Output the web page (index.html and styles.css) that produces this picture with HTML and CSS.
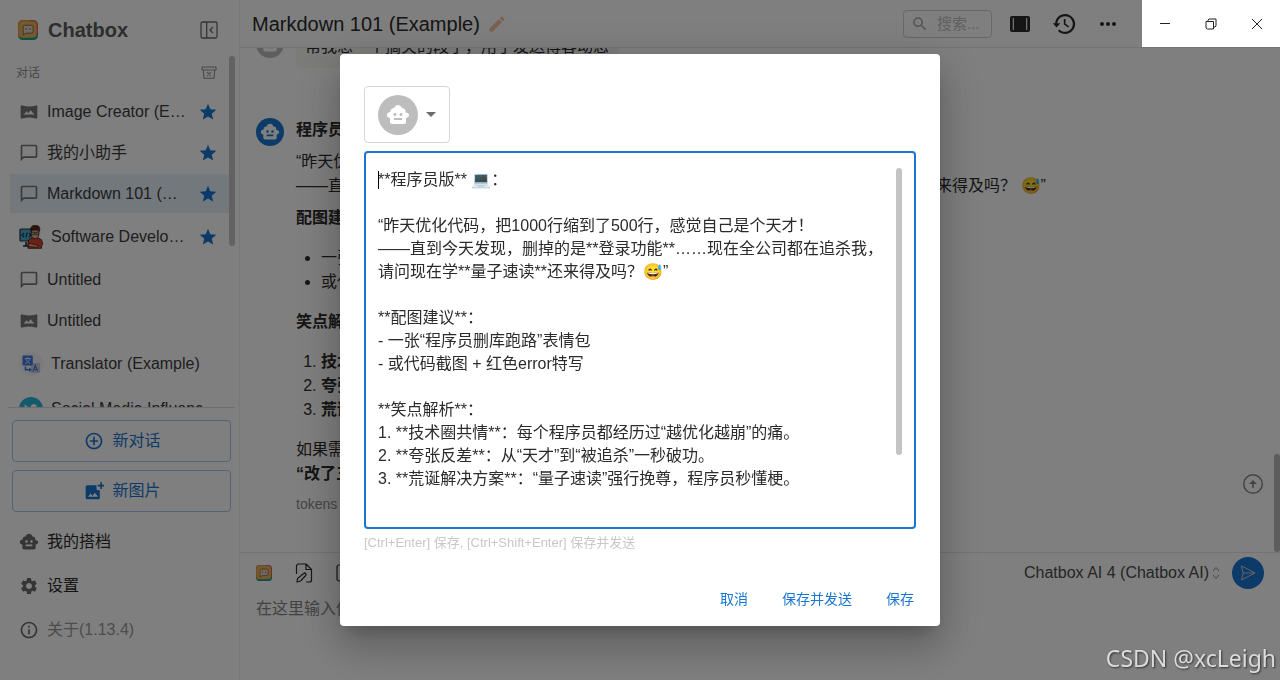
FILE: index.html
```html
<!DOCTYPE html>
<html lang="zh-CN">
<head>
<meta charset="utf-8">
<meta name="viewport" content="width=device-width, initial-scale=1">
<title>Chatbox</title>
<link rel="stylesheet" href="styles.css">
</head>
<body>
<svg class="sprite" aria-hidden="true">
  <symbol id="i-logo" viewBox="0 0 20 20">
    <rect x="0" y="2" width="20" height="18" rx="4.5" fill="#1f9c8a"/>
    <path d="M4.500 0H15.500a4.500 4.500 0 0 1 4.500 4.500V14H0V4.500A4.500 4.500 0 0 1 4.500 0Z" fill="#e0604c"/>
    <path d="M4.500 0H12L2 18.500 0 15V4.500A4.500 4.500 0 0 1 4.500 0Z" fill="#d9a03c"/>
    <rect x="1.300" y="1.300" width="17.400" height="16.400" rx="3.600" fill="#e8b060"/>
    <path d="M6.500 5.300h7a1.600 1.600 0 0 1 1.600 1.600v4.600a1.600 1.600 0 0 1-1.600 1.600H8.300L5.200 15V6.900a1.600 1.600 0 0 1 1.300-1.600Z" fill="#e6d5bf" stroke="#7b6348" stroke-width=".9"/>
    <path d="M8.300 8.300v1.500M12 8.300v1.500" stroke="#5d4630" stroke-width="1"/>
  </symbol>
  <symbol id="i-robot" viewBox="0 0 24 24"><path d="M19.500 9.500C20 7 18.500 5 16 5.300 15.500 3.300 14 2 12 2S8.500 3.300 8 5.300C5.500 5 4 7 4.500 9c-2 .2-3.500 1.300-3.500 3s1.300 3 3 3v4c0 1.100.9 2 2 2h12c1.100 0 2-.9 2-2v-4c1.660 0 3-1.340 3-3s-1.500-2.500-3.500-2.500M7.500 11.500c0-.83.67-1.500 1.500-1.500s1.500.67 1.500 1.500S9.830 13 9 13s-1.500-.67-1.500-1.500M16 17H8v-2h8zm-1-4c-.83 0-1.500-.67-1.500-1.500S14.170 10 15 10s1.500.67 1.500 1.500S15.830 13 15 13"/></symbol>
  <symbol id="i-pano" viewBox="0 0 24 24"><path d="M21.010 4C20.450 4 17.400 5.500 12 5.500c-5.310 0-8.490-1.490-9.010-1.490C2.460 4.010 2 4.450 2 5.020V19c0 .57.46 1.010.99 1.010.57 0 3.550-1.500 9.010-1.500 5.420 0 8.440 1.500 9.010 1.500.53 0 .99-.44.99-1.010V5c0-.57-.46-1-.99-1zM12 15c-2.340 0-4.520.15-6.520.41l3.690-4.420 2 2.400L14 10l4.510 5.400C16.520 15.150 14.300 15 12 15z"/></symbol>
  <symbol id="i-chat" viewBox="0 0 24 24"><path d="M4 4h16v12H5.170L4 17.170V4m0-2c-1.100 0-1.990.9-1.990 2L2 22l4-4h14c1.100 0 2-.9 2-2V4c0-1.100-.9-2-2-2z"/></symbol>
  <symbol id="i-star" viewBox="0 0 24 24"><path d="M12 17.270 18.180 21l-1.640-7.030L22 9.240l-7.190-.61L12 2 9.190 8.630 2 9.240l5.460 4.730L5.820 21z"/></symbol>
  <symbol id="i-dev" viewBox="0 0 24 24">
    <path d="M7 17v4M4 21h7" stroke="#222" stroke-width="1.500"/>
    <rect x="1" y="4" width="15" height="12" rx="1" fill="#48a9cf" stroke="#26333a" stroke-width="1.200"/>
    <path d="m5 8-2 2 2 2M10 8l2 2-2 2M8.300 7.500l-1.400 5" fill="none" stroke="#1c3440" stroke-width="1.100"/>
    <path d="M9 23.300c-.8-7 1-9.500 3-10l4-1 4 1c2.400.6 3.800 2.700 3.500 6.500l-1 .8V23.300Z" fill="#d8432f" stroke="#331713" stroke-width=".8"/>
    <path d="M12.300 5h7.500v5c0 5-7.500 5-7.500 0Z" fill="#e0a27e" stroke="#3a2019" stroke-width=".8"/>
    <path d="M12 6.500c-1.500-4 1-6.300 4.300-6.300 3.800 0 5.500 2.500 4 6.300l-1.300-2h-5.300Z" fill="#5b2a1b" stroke="#2a1510" stroke-width=".6"/>
    <path d="M12.500 7.300h3v2h-3zM16.800 7.300h3v2h-3z" fill="#d9c3b4" stroke="#222" stroke-width=".7"/>
    <path d="m9.500 18.200 10.300 2.300-2 1.800-8-.7Z" fill="#e0a27e" stroke="#3a2019" stroke-width=".7"/>
  </symbol>
  <symbol id="i-trans" viewBox="0 0 24 24">
    <circle cx="12" cy="12" r="12" fill="#f4f4f6"/>
    <rect x="11.500" y="11" width="9.500" height="10" rx="1" fill="#c9ced9"/>
    <rect x="3.500" y="3.500" width="10.300" height="10" rx="1" fill="#3f78e8"/>
    <path d="M5.800 6.500h5.800M8.700 5v1.500M10.800 6.500c-.7 2.500-2.200 4-4.600 5M6.700 6.500c.7 2.500 2.200 4 4.600 5" fill="none" stroke="#dbe5fb"/>
    <path d="m13.900 19.500 2.400-6.200 2.400 6.200M14.800 17.500h3" fill="none" stroke="#3f78e8" stroke-width="1.100"/>
    <path d="M6.500 14.500v3.300h4" fill="none" stroke="#3f78e8" stroke-width="1.600"/><path d="m10 15.500 3 2.300-3 2.300z" fill="#3f78e8"/>
  </symbol>
  <symbol id="i-bird" viewBox="0 0 24 24"><circle cx="12" cy="12" r="12" fill="#28b5dc"/><path d="M18.500 8.300c-.5.2-1 .4-1.500.4.500-.3 1-.9 1.200-1.500-.5.300-1.100.6-1.700.7a2.800 2.800 0 0 0-4.700 2.500A7.700 7.700 0 0 1 6 7.500a2.800 2.800 0 0 0 .9 3.700c-.5 0-.9-.1-1.300-.3 0 1.300 1 2.500 2.200 2.700-.4.100-.8.1-1.200 0a2.700 2.700 0 0 0 2.500 1.900A5.600 5.600 0 0 1 5 16.700c6 3.500 12.400-.8 12-7 .6-.4 1.100-.8 1.500-1.400Z" fill="#fff"/></symbol>
  <symbol id="i-gear" viewBox="0 0 24 24"><path d="M19.140 12.940c.04-.3.06-.61.06-.94 0-.32-.02-.64-.07-.94l2.030-1.580c.18-.14.23-.41.12-.61l-1.920-3.320c-.12-.22-.37-.29-.59-.22l-2.390.96c-.5-.38-1.030-.7-1.620-.94l-.36-2.540c-.04-.24-.24-.41-.48-.41h-3.840c-.24 0-.43.17-.47.41l-.36 2.540c-.59.24-1.130.57-1.620.94l-2.390-.96c-.22-.08-.47 0-.59.22L2.740 8.870c-.12.21-.08.47.12.61l2.030 1.580c-.05.3-.09.63-.09.94s.02.64.07.94l-2.030 1.580c-.18.14-.23.41-.12.61l1.920 3.320c.12.22.37.29.59.22l2.390-.96c.5.38 1.030.7 1.620.94l.36 2.540c.05.24.24.41.48.41h3.840c.24 0 .44-.17.47-.41l.36-2.540c.59-.24 1.130-.56 1.620-.94l2.390.96c.22.08.47 0 .59-.22l1.920-3.320c.12-.22.07-.47-.12-.61zM12 15.600c-1.980 0-3.600-1.620-3.600-3.600s1.620-3.600 3.600-3.600 3.600 1.620 3.600 3.600-1.620 3.600-3.600 3.600"/></symbol>
  <symbol id="i-info" viewBox="0 0 24 24"><path d="M11 7h2v2h-2zm0 4h2v6h-2zm1-9C6.480 2 2 6.480 2 12s4.480 10 10 10 10-4.480 10-10S17.520 2 12 2m0 18c-4.410 0-8-3.590-8-8s3.590-8 8-8 8 3.590 8 8-3.590 8-8 8"/></symbol>
  <symbol id="i-add" viewBox="0 0 24 24"><path d="M13 7h-2v4H7v2h4v4h2v-4h4v-2h-4zm-1-5C6.480 2 2 6.480 2 12s4.480 10 10 10 10-4.480 10-10S17.520 2 12 2m0 18c-4.410 0-8-3.590-8-8s3.590-8 8-8 8 3.590 8 8-3.590 8-8 8"/></symbol>
  <symbol id="i-photo" viewBox="0 0 24 24"><path d="M21.500 1.500h-2v3h-3v2h3v3h2v-3h3v-2h-3zM15 5H4c-1.100 0-2 .9-2 2v13c0 1.100.9 2 2 2h13c1.100 0 2-.9 2-2v-9h-2.500A1.500 1.500 0 0 1 15 9.500zM5 19l3-4 2 3 3-4 4 5z"/></symbol>
  <symbol id="i-edit" viewBox="0 0 24 24"><path d="M3 17.250V21h3.750L17.810 9.940l-3.750-3.750zM20.710 7.040c.39-.39.39-1.020 0-1.410l-2.340-2.340a1 1 0 0 0-1.410 0l-1.830 1.830 3.750 3.750z"/></symbol>
  <symbol id="i-search" viewBox="0 0 24 24"><path d="M15.500 14h-.79l-.28-.27C15.410 12.590 16 11.110 16 9.500 16 5.910 13.090 3 9.500 3S3 5.910 3 9.500 5.910 16 9.500 16c1.610 0 3.090-.59 4.230-1.570l.27.28v.79l5 4.990L20.490 19zm-6 0C7.010 14 5 11.990 5 9.500S7.010 5 9.500 5 14 7.010 14 9.500 11.990 14 9.500 14"/></symbol>
  <symbol id="i-history" viewBox="0 0 24 24"><path d="M13 2c-5.200 0-9.500 4.100-9.900 9.300H.8l3.700 4.200 3.900-4.200H5.300C5.700 7.300 9 4.200 13 4.200a7.800 7.800 0 1 1-5.600 13.200l-1.500 1.500A10 10 0 1 0 13 2m-1.200 5v5.600l4.500 3 .9-1.300-3.700-2.500V7z"/></symbol>
  <symbol id="i-dots" viewBox="0 0 24 24"><path d="M6 10a2 2 0 1 0 0 4 2 2 0 0 0 0-4m12 0a2 2 0 1 0 0 4 2 2 0 0 0 0-4m-6 0a2 2 0 1 0 0 4 2 2 0 0 0 0-4"/></symbol>
  <symbol id="i-width" viewBox="0 0 24 24"><rect x="2" y="4" width="20" height="16" rx="2"/><path d="M5.300 6v12M18.700 6v12" stroke="#fff" stroke-width="1.100"/></symbol>
  <symbol id="i-collapse" viewBox="0 0 18 18"><g fill="none" stroke="currentColor" stroke-width="1.300"><rect x="1" y="1" width="16" height="16" rx="1.500"/><path d="M6.700 1v16M13 6l-3 3 3 3"/></g></symbol>
  <symbol id="i-archive" viewBox="0 0 16 16"><g fill="none" stroke="currentColor" stroke-width="1.100"><rect x="1" y="2" width="14" height="3" rx=".5"/><path d="M2.300 5l.7 8.300h10L13.700 5M6 7.200l4 4M10 7.200l-4 4"/></g></symbol>
  <symbol id="i-send" viewBox="0 0 16 16"><path d="M1.500 1 15 8 1.500 15l1.700-7ZM3.200 8H15" fill="none" stroke="currentColor" stroke-width="1" stroke-linejoin="round"/></symbol>
</svg>

<div class="app">
  <aside class="sidebar">
    <div class="brand">
      <svg class="icon20"><use href="#i-logo"/></svg>
      <h1>Chatbox</h1>
      <button class="icon-btn" aria-label="收起侧栏"><svg class="icon18"><use href="#i-collapse"/></svg></button>
    </div>
    <div class="session-area">
      <div class="session-head"><span>对话</span><button class="icon-btn" aria-label="清理对话"><svg class="icon16"><use href="#i-archive"/></svg></button></div>
      <nav class="sessions">
        <a class="session" href="#"><svg class="icon20"><use href="#i-pano"/></svg><span class="name">Image Creator (Example)</span><svg class="icon20 star"><use href="#i-star"/></svg></a>
        <a class="session" href="#"><svg class="icon20"><use href="#i-chat"/></svg><span class="name">我的小助手</span><svg class="icon20 star"><use href="#i-star"/></svg></a>
        <a class="session selected" href="#"><svg class="icon20"><use href="#i-chat"/></svg><span class="name">Markdown 101 (Example)</span><svg class="icon20 star"><use href="#i-star"/></svg></a>
        <a class="session tall" href="#"><svg class="icon24"><use href="#i-dev"/></svg><span class="name">Software Developer (Example)</span><svg class="icon20 star"><use href="#i-star"/></svg></a>
        <a class="session" href="#"><svg class="icon20"><use href="#i-chat"/></svg><span class="name">Untitled</span></a>
        <a class="session" href="#"><svg class="icon20"><use href="#i-pano"/></svg><span class="name">Untitled</span></a>
        <a class="session tall" href="#"><svg class="icon24"><use href="#i-trans"/></svg><span class="name">Translator (Example)</span></a>
        <a class="session tall" href="#"><svg class="icon24"><use href="#i-bird"/></svg><span class="name">Social Media Influencer (Example)</span></a>
      </nav>
      <div class="thumb session-thumb"></div>
    </div>
    <div class="create">
      <button class="outlined"><svg class="icon20"><use href="#i-add"/></svg>新对话</button>
      <button class="outlined"><svg class="icon20"><use href="#i-photo"/></svg>新图片</button>
    </div>
    <nav class="menu">
      <a href="#"><svg class="icon20"><use href="#i-robot"/></svg>我的搭档</a>
      <a href="#"><svg class="icon20"><use href="#i-gear"/></svg>设置</a>
      <a class="muted" href="#"><svg class="icon20"><use href="#i-info"/></svg>关于(1.13.4)</a>
    </nav>
  </aside>

  <main class="main">
    <header class="topbar">
      <h2>Markdown 101 (Example)</h2>
      <button class="icon-btn pencil" aria-label="编辑"><svg class="icon20"><use href="#i-edit"/></svg></button>
      <div class="tools">
        <button class="search"><svg class="icon18"><use href="#i-search"/></svg>搜索...</button>
        <button class="icon-btn" aria-label="宽度"><svg class="icon24"><use href="#i-width"/></svg></button>
        <button class="icon-btn" aria-label="历史"><svg class="icon24"><use href="#i-history"/></svg></button>
        <button class="icon-btn" aria-label="更多"><svg class="icon24"><use href="#i-dots"/></svg></button>
      </div>
    </header>

    <section class="messages">
      <article class="message user">
        <span class="avatar grey"><svg class="icon20"><use href="#i-robot"/></svg></span>
        <p class="bubble">帮我想一个搞笑的段子，用于发送博客动态</p>
      </article>
      <article class="message">
        <span class="avatar blue"><svg class="icon20"><use href="#i-robot"/></svg></span>
        <div class="body">
          <p><strong>程序员版</strong> 💻：</p>
          <p>“昨天优化代码，把1000行缩到了500行，感觉自己是个天才！<br>——直到今天发现，删掉的是<strong>登录功能</strong>……现在全公司都在追杀我，请问现在学<strong>量子速读</strong>还来得及吗？ 😅”</p>
          <p><strong>配图建议</strong>：</p>
          <ul><li>一张“程序员删库跑路”表情包</li><li>或代码截图 + 红色error特写</li></ul>
          <p><strong>笑点解析</strong>：</p>
          <ol><li><strong>技术圈共情</strong>：每个程序员都经历过“越优化越崩”的痛。</li><li><strong>夸张反差</strong>：从“天才”到“被追杀”一秒破功。</li><li><strong>荒诞解决方案</strong>：“量子速读”强行挽尊。</li></ol>
          <p>如果需要调整风格，请告诉我！<br><strong>“改了三版”</strong></p>
          <p class="tokens">tokens used: 512</p>
        </div>
      </article>
      <button class="to-top" aria-label="回到顶部"><svg viewBox="0 0 22 22"><circle cx="11" cy="11" r="9.300" fill="none" stroke="currentColor" stroke-width="1.500"/><path d="M11 15V9" fill="none" stroke="currentColor" stroke-width="1.600"/><path d="M7 11l4-4 4 4z"/></svg></button>
      <div class="thumb message-thumb"></div>
    </section>

    <footer class="composer">
      <div class="composer-bar">
        <svg class="icon16"><use href="#i-logo"/></svg>
        <button class="icon-btn" aria-label="添加文件"><svg class="file" viewBox="0 0 18 20"><path d="M1.500 11V3a2 2 0 0 1 2-2H11l5.500 5.500V17a2 2 0 0 1-2 2H11M11 1v5.500h5.500M2 19l.5-3.500 6.200-5a1.400 1.400 0 0 1 2 2L5.500 18Z" fill="none" stroke="currentColor" stroke-width="1.200" stroke-linejoin="round"/></svg></button>
        <button class="icon-btn" aria-label="添加图片"><svg class="file" viewBox="0 0 18 20"><path d="M3 2h12a2 2 0 0 1 2 2v12a2 2 0 0 1-2 2H3a2 2 0 0 1-2-2V4a2 2 0 0 1 2-2M9 13l3-3 5 5" fill="none" stroke="currentColor" stroke-width="1.200"/><circle cx="6" cy="6" r="1"/></svg></button>
        <button class="model">Chatbox AI 4 (Chatbox AI)<svg viewBox="0 0 8 14"><path d="M1 5l3-3.500L7 5M1 9l3 3.500L7 9" fill="none" stroke="currentColor"/></svg></button>
        <button class="send" aria-label="发送"><svg class="icon16"><use href="#i-send"/></svg></button>
      </div>
      <textarea class="prompt" aria-label="输入" placeholder="在这里输入你的问题..."></textarea>
    </footer>
  </main>
</div>

<div class="backdrop">
  <div class="dialog" role="dialog" aria-modal="true" aria-label="编辑消息">
    <button class="role-select" aria-haspopup="listbox" aria-label="角色">
      <span class="avatar large"><svg class="icon24"><use href="#i-robot"/></svg></span>
      <svg class="caret" viewBox="0 0 10 5"><path d="M0 0h10L5 5z"/></svg>
    </button>
    <div class="field">
      <textarea class="editor" rows="15" aria-label="消息内容">**程序员版** 💻：

“昨天优化代码，把1000行缩到了500行，感觉自己是个天才！
——直到今天发现，删掉的是**登录功能**……现在全公司都在追杀我，请问现在学**量子速读**还来得及吗？😅”

**配图建议**：
- 一张“程序员删库跑路”表情包
- 或代码截图 + 红色error特写

**笑点解析**：
1. **技术圈共情**：每个程序员都经历过“越优化越崩”的痛。
2. **夸张反差**：从“天才”到“被追杀”一秒破功。
3. **荒诞解决方案**：“量子速读”强行挽尊，程序员秒懂梗。
</textarea>
      <div class="text-caret"></div>
      <div class="thumb editor-thumb"></div>
    </div>
    <p class="hint">[Ctrl+Enter] 保存, [Ctrl+Shift+Enter] 保存并发送</p>
    <div class="actions">
      <button>取消</button>
      <button>保存并发送</button>
      <button>保存</button>
    </div>
  </div>
</div>

<div class="window-controls">
  <button aria-label="最小化"><svg viewBox="0 0 12 12"><path d="M1 5.500h10"/></svg></button>
  <button aria-label="还原"><svg viewBox="0 0 12 12"><path d="M1 3.500h7.500V11H2.500L1 10ZM3 3.500V2l1-1h7v7L10 9H8.500"/></svg></button>
  <button aria-label="关闭"><svg viewBox="0 0 12 12"><path d="M1 1l10 10M11 1 1 11"/></svg></button>
</div>
<div class="watermark">CSDN @xcLeigh</div>
</body>
</html>
```
FILE: styles.css
```css
* { box-sizing: border-box; }

body {
  margin: 0;
  font: 16px/24px "Liberation Sans", "Noto Sans CJK SC", sans-serif;
  color: #2b2b2b;
  background: #fff;
}

h1, h2, p, ul, ol { margin: 0; }
a { color: inherit; text-decoration: none; }
button, textarea { font: inherit; color: inherit; }
button { border: 0; padding: 0; background: none; }
svg { display: block; flex: none; fill: currentColor; }

.sprite { position: absolute; width: 0; height: 0; }
.icon16 { width: 16px; height: 16px; }
.icon18 { width: 18px; height: 18px; }
.icon20 { width: 20px; height: 20px; }
.icon24 { width: 24px; height: 24px; }
.thumb { position: absolute; width: 6px; border-radius: 3px; background: #c4c4c4; }

.app {
  display: grid;
  grid-template-columns: 240px minmax(0, 1fr);
  height: 100vh;
  overflow: hidden;
}

/* Sidebar */
.sidebar {
  display: flex;
  flex-direction: column;
  min-height: 0;
  border-right: 1px solid #efefef;
}
.brand {
  display: flex;
  align-items: center;
  gap: 10px;
  height: 56px;
  padding: 4px 21px 0 18px;
  color: #6b6b6b;
}
.brand h1 { flex: 1; font-size: 20px; color: #5c5c5c; }
.session-area {
  position: relative;
  flex: 1;
  min-height: 0;
  margin: 0 4px 0 8px;
  overflow: hidden;
  border-bottom: 1px solid #dcdcdc;
}
.session-head {
  display: flex;
  align-items: center;
  justify-content: space-between;
  height: 36px;
  padding: 0 18px 2px 8px;
  font-size: 12px;
  color: #8f8f8f;
}
.sessions { display: flex; flex-direction: column; gap: 2px; padding: 0 6px 0 2px; }
.session {
  display: flex;
  flex: none;
  align-items: center;
  gap: 8px;
  height: 39px;
  padding: 0 8px 0 9px;
  color: #777;
}
.session.tall { height: 43px; }
.session.selected { background: #e6f0f8; }
.name {
  flex: 1;
  overflow: hidden;
  white-space: nowrap;
  text-overflow: ellipsis;
  color: #3c3c3c;
}
.star { margin: 0 3px; color: #1976d2; }
.session-thumb { top: 0; right: 0; height: 190px; }

.create { display: flex; flex-direction: column; gap: 8px; padding: 12px 8px 8px 12px; }
.outlined {
  display: flex;
  align-items: center;
  justify-content: center;
  gap: 8px;
  height: 42px;
  padding-left: 2px;
  border: 1px solid #a3c8ed;
  border-radius: 4px;
  color: #1976d2;
}
.menu { padding-bottom: 28px; }
.menu a { display: flex; align-items: center; gap: 8px; height: 44px; padding-left: 19px; }
.menu svg { color: #6b6b6b; }
.menu .muted { color: #999; }

/* Main column */
.main { display: flex; flex-direction: column; min-width: 0; min-height: 0; }
.topbar {
  display: flex;
  align-items: center;
  height: 48px;
  padding: 0 160px 0 12px;
  border-bottom: 1px solid #e6e6e6;
}
.topbar h2 { font-size: 20px; font-weight: 400; }
.pencil { padding-left: 7px; color: #f3c09e; }
.tools { display: flex; align-items: center; gap: 20px; margin-left: auto; }
.search {
  display: flex;
  align-items: center;
  gap: 8px;
  width: 89px;
  height: 28px;
  margin-right: -4px;
  padding-left: 7px;
  border: 1px solid #d0d0d0;
  border-radius: 4px;
  color: #c0c0c0;
  font-size: 15px;
}
.search svg { color: #aaa; }

.messages {
  position: relative;
  flex: 1;
  min-height: 0;
  overflow: hidden;
  padding: 0 20px 0 16px;
}
.message { display: flex; gap: 12px; }
.message.user { height: 60px; margin-top: -18px; margin-bottom: 28px; }
.avatar {
  display: flex;
  flex: none;
  align-items: center;
  justify-content: center;
  width: 28px;
  height: 28px;
  border-radius: 50%;
  color: #fff;
}
.grey { background: #bdbdbd; }
.blue { background: #1976d2; }
.bubble { align-self: flex-start; padding: 5px 9px 9px; border-radius: 6px; background: #f6f6f4; }
.body > * { margin-bottom: 8px; }
.body > ul, .body > ol { margin: 16px 0; padding-left: 25px; }
.body > .tokens { margin-top: -2px; font-size: 14px; color: #8a8a8a; }
.to-top { position: absolute; right: 16px; bottom: 57px; width: 22px; height: 22px; color: #888; }
.message-thumb { right: 0; bottom: 0; height: 98px; background: #b8b8b8; }

.composer { flex: none; height: 128px; padding: 4px 16px 0; border-top: 1px solid #e6e6e6; }
.composer-bar { display: flex; align-items: center; gap: 23px; height: 32px; }
.file { width: 18px; height: 20px; }
.model { display: flex; align-items: center; gap: 3px; margin-left: auto; color: #4a4a4a; }
.model svg { width: 8px; height: 14px; color: #888; }
.send {
  display: flex;
  align-items: center;
  justify-content: center;
  width: 32px;
  height: 32px;
  margin-left: -11px;
  border-radius: 50%;
  background: #1976d2;
  color: #ccc;
}
.prompt {
  display: block;
  width: 100%;
  height: 64px;
  padding: 8px 0;
  border: 0;
  outline: 0;
  resize: none;
  background: none;
}
.prompt::placeholder { color: #858585; }

/* Dialog */
.backdrop {
  position: fixed;
  inset: 0;
  display: flex;
  align-items: center;
  justify-content: center;
  background: rgba(0, 0, 0, .5);
}
.dialog {
  width: 600px;
  max-width: calc(100% - 64px);
  padding: 32px 24px 8px;
  border-radius: 4px;
  background: #fff;
  box-shadow: 0 11px 15px -7px rgba(0, 0, 0, .2), 0 24px 38px 3px rgba(0, 0, 0, .14), 0 9px 46px 8px rgba(0, 0, 0, .12);
}
.role-select {
  display: flex;
  align-items: center;
  gap: 8px;
  height: 57px;
  margin-bottom: 8px;
  padding: 0 13px;
  border: 1px solid #d6d6d6;
  border-radius: 4px;
}
.large { width: 40px; height: 40px; background: #bdbdbd; }
.caret { width: 10px; height: 5px; color: #6b6b6b; }
.field {
  position: relative;
  padding: 15px 12px 14px;
  border: 2px solid #1976d2;
  border-radius: 4px;
}
.editor {
  display: block;
  width: 100%;
  padding: 0 14px 0 0;
  border: 0;
  outline: 0;
  resize: none;
  overflow: hidden;
  background: none;
  line-height: 23px;
}
.text-caret { position: absolute; left: 12px; top: 18px; width: 1px; height: 18px; background: #000; }
.editor-thumb { right: 12px; top: 15px; height: 287px; }
.hint { padding-top: 2px; font-size: 13px; color: #c8c8c8; }
.actions { display: flex; justify-content: flex-end; gap: 8px; margin: 26px -16px 0; padding-bottom: 1px; }
.actions button { min-width: 64px; height: 36px; padding: 0 8px; font-size: 14px; color: #1976d2; }

/* Window frame */
.window-controls {
  position: fixed;
  top: 0;
  right: 0;
  display: flex;
  align-items: center;
  height: 47px;
  background: #fff;
}
.window-controls button { display: grid; place-items: center; width: 46px; height: 47px; }
.window-controls svg { width: 12px; height: 12px; fill: none; stroke: #222; stroke-width: 1; }
.watermark {
  position: fixed;
  right: 4px;
  bottom: 6px;
  font: 23px/32px "Noto Sans", sans-serif;
  color: #dcdcdc;
  text-shadow: 1px 1px 2px #333;
}
```
